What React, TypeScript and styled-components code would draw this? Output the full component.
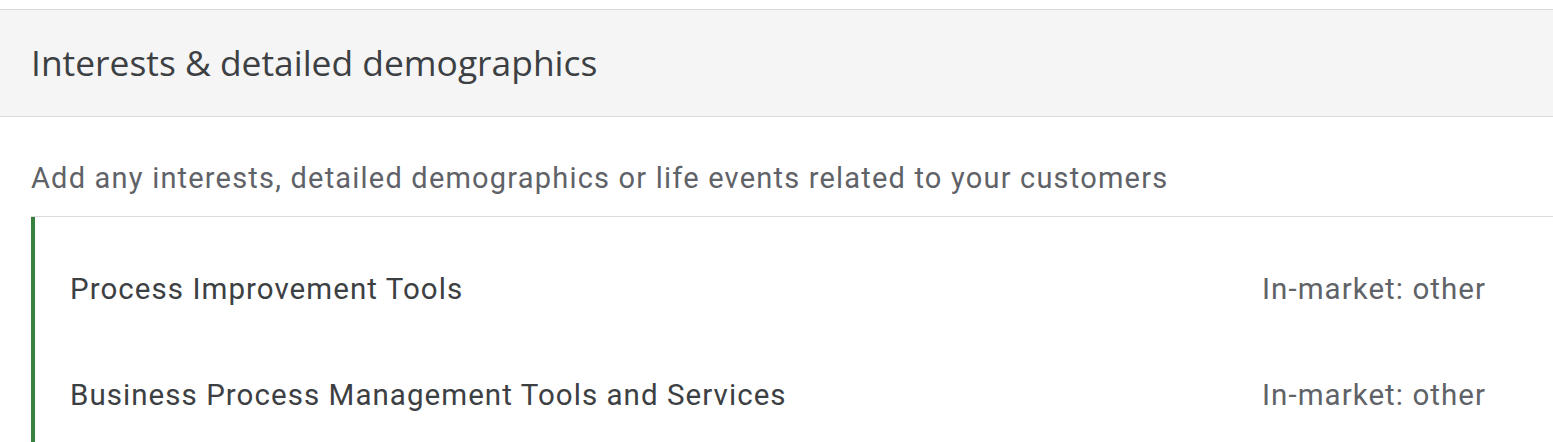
import React from "react";
import styled, { createGlobalStyle } from "styled-components";

const GlobalStyle = createGlobalStyle`
  html, body {
    margin: 0;
    padding: 0;
    background: #ffffff;
  }
  body {
    font-family: Roboto, "Liberation Sans", sans-serif;
    -webkit-font-smoothing: antialiased;
  }
`;

const Page = styled.div`
  padding-top: 9px;
  width: 1553px;
  height: 442px;
  overflow: hidden;
  box-sizing: border-box;
`;

const Header = styled.div`
  height: 106px;
  display: flex;
  align-items: center;
  padding: 0 31px;
  background: #f5f5f5;
  border-top: 1px solid #dadce0;
  border-bottom: 1px solid #dadce0;
`;

const Title = styled.h2`
  margin: 0;
  font-family: "Open Sans", Roboto, sans-serif;
  font-size: 35.4px;
  font-weight: 400;
  color: #3c4043;
  transform: translateY(-1px);
`;

const Body = styled.div`
  padding-left: 31px;
`;

const Description = styled.p`
  margin: 0;
  height: 100px;
  padding-top: 44px;
  font-size: 29px;
  line-height: normal;
  letter-spacing: 1.2px;
  color: #5f6368;
  border-bottom: 1px solid #dadce0;
  box-sizing: border-box;
`;

const List = styled.ul`
  margin: 0;
  padding: 19px 0 40px;
  list-style: none;
  border-left: 4px solid #37803e;
`;

const Row = styled.li`
  height: 106px;
  display: flex;
  align-items: center;
  justify-content: space-between;
  padding: 0 68px 0 35px;
  font-size: 29.5px;
  letter-spacing: 1.05px;
`;

const Name = styled.span`
  color: #3c4043;
`;

const Category = styled.span`
  color: #5f6368;
  margin-right: -1px;
`;

const items = [
  { name: "Process Improvement Tools", category: "In-market: other" },
  { name: "Business Process Management Tools and Services", category: "In-market: other" },
];

export default function App() {
  return (
    <>
      <GlobalStyle />
      <Page>
        <Header>
          <Title>Interests &amp; detailed demographics</Title>
        </Header>
        <Body>
          <Description>
            Add any interests, detailed demographics or life events related to your customers
          </Description>
          <List>
            {items.map((item) => (
              <Row key={item.name}>
                <Name>{item.name}</Name>
                <Category>{item.category}</Category>
              </Row>
            ))}
          </List>
        </Body>
      </Page>
    </>
  );
}
